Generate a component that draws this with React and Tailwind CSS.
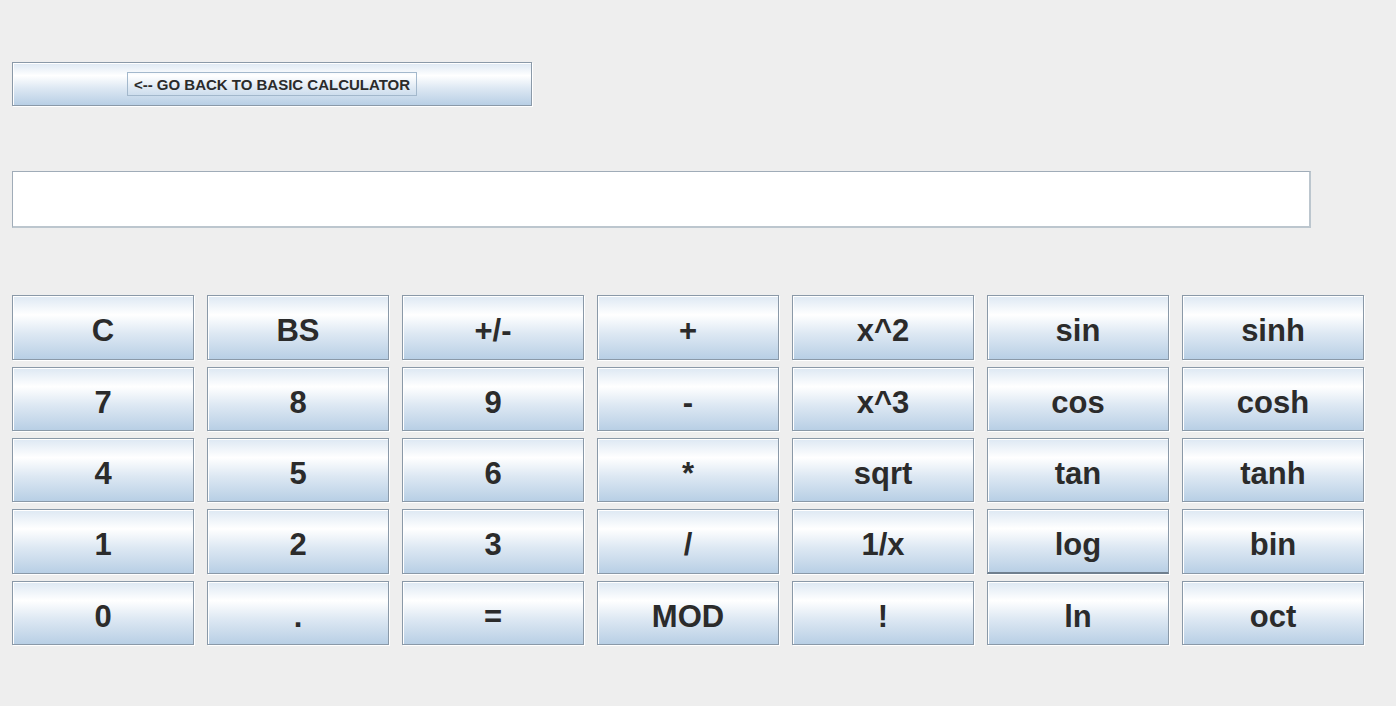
import React from "react";

const rows = [
  ["C", "BS", "+/-", "+", "x^2", "sin", "sinh"],
  ["7", "8", "9", "-", "x^3", "cos", "cosh"],
  ["4", "5", "6", "*", "sqrt", "tan", "tanh"],
  ["1", "2", "3", "/", "1/x", "log", "bin"],
  ["0", ".", "=", "MOD", "!", "ln", "oct"],
];

const grad =
  "bg-[linear-gradient(to_bottom,#dde8f3_0%,#ffffff_30%,#dde8f3_60%,#b8cfe5_100%)]";

function Btn({ label }) {
  const focus = label === "log";
  return (
    <div
      className={`${grad} border border-[#8a99a8] ${focus ? "border-b-2 border-b-[#6f7f8e]" : ""} shadow-[inset_1px_1px_0_#ffffff,1px_1px_0_#ffffff] flex items-center justify-center text-[31px] font-bold text-[#2b2b2b] leading-none pt-[6px]`}
    >
      {label}
    </div>
  );
}

export default function App() {
  return (
    <div
      className="w-[1396px] h-[706px] bg-[#eeeeee] pl-[12px] pt-[62px] flex flex-col"
      style={{ fontFamily: '"Liberation Sans", Arial, sans-serif' }}
    >
      <div
        className={`w-[520px] h-[44px] ${grad} border border-[#8a99a8] shadow-[inset_1px_1px_0_#ffffff,1px_1px_0_#ffffff] flex items-center justify-center`}
      >
        <span className="border border-[#a3b8cc] px-[6px] h-[24px] flex items-center text-[15px] font-bold text-[#2b2b2b] leading-none pt-[1px]">
          {"<-- GO BACK TO BASIC CALCULATOR"}
        </span>
      </div>

      <div className="mt-[65px] w-[1299px] h-[57px] bg-white border border-[#a0acb8] border-b-[2px] border-r-[2px] border-b-[#bcc6ce] border-r-[#bcc6ce]" />

      <div className="mt-[67px] grid grid-cols-[repeat(7,182px)] grid-rows-[65px_64px_64px_65px_64px] gap-x-[13px] gap-y-[7px]">
        {rows.flat().map((l, i) => (
          <Btn key={i} label={l} />
        ))}
      </div>
    </div>
  );
}
